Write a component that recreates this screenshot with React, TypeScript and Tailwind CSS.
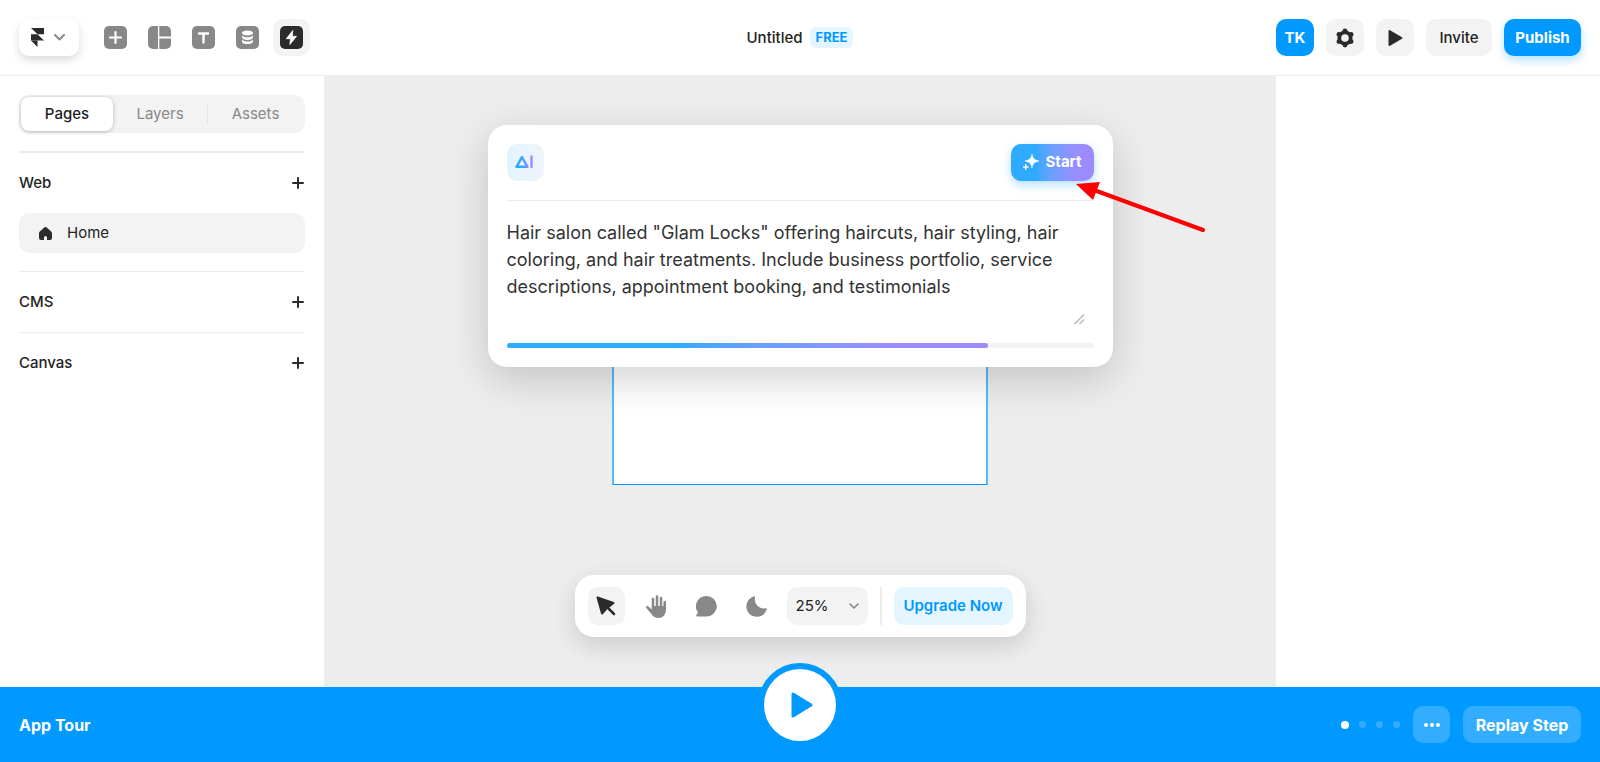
import { ReactNode, useState } from "react";

type IconProps = { className?: string };

const FramerLogo = () => (
    <svg width="13" height="19" viewBox="0 0 13 19" fill="#2b2b2b">
        <path d="M0 0h13v6.3H6.5z" />
        <path d="M0 6.3h6.5L13 12.6H0z" />
        <path d="M0 12.6h6.5V19z" />
    </svg>
);

const ChevronIcon = ({ className }: IconProps) => (
    <svg className={className} width="11" height="7" viewBox="0 0 11 7" fill="none" stroke="#888" strokeWidth="2" strokeLinecap="round" strokeLinejoin="round">
        <path d="M1 1l4.5 4.5L10 1" />
    </svg>
);

const InsertIcon = () => (
    <svg width="23" height="23" viewBox="0 0 23 23">
        <rect width="23" height="23" rx="5" fill="#888" />
        <path d="M11.5 6v11M6 11.5h11" stroke="#fff" strokeWidth="2.2" strokeLinecap="round" />
    </svg>
);

const LayoutIcon = () => (
    <svg width="23" height="23" viewBox="0 0 23 23" fill="#888">
        <path d="M5 0h5v23H5a5 5 0 0 1-5-5V5a5 5 0 0 1 5-5z" />
        <path d="M11.300 0h6.700a5 5 0 0 1 5 5v5.500H11.300z" />
        <path d="M11.300 12.500H23V18a5 5 0 0 1-5 5h-6.700z" />
    </svg>
);

const TypeIcon = () => (
    <svg width="23" height="23" viewBox="0 0 23 23">
        <rect width="23" height="23" rx="5" fill="#888" />
        <path d="M7 7.5h9M11.5 7.5v9" stroke="#fff" strokeWidth="2.4" strokeLinecap="round" />
    </svg>
);

const DatabaseIcon = () => (
    <svg width="23" height="23" viewBox="0 0 23 23">
        <rect width="23" height="23" rx="5" fill="#888" />
        <ellipse cx="11.5" cy="7" rx="5.5" ry="2.6" fill="#fff" />
        <path d="M6 9.3c1 1.5 3 2 5.5 2s4.5-.5 5.5-2v1.9c0 1.6-2.4 2.7-5.5 2.7S6 12.8 6 11.2z" fill="#fff" />
        <path d="M6 13.5c1 1.5 3 2 5.5 2s4.5-.5 5.5-2v1.9c0 1.6-2.4 2.7-5.5 2.7S6 17 6 15.4z" fill="#fff" />
    </svg>
);

const BoltIcon = () => (
    <svg width="23" height="23" viewBox="0 0 23 23">
        <rect width="23" height="23" rx="5" fill="#2b2b2b" />
        <path d="M12.8 4.5L6.3 12.7h4.2l-.6 5.8 6.6-8.2h-4.3z" fill="#fff" stroke="#fff" strokeWidth=".8" strokeLinejoin="round" />
    </svg>
);

const GearIcon = () => (
    <svg width="20" height="20" viewBox="0 0 20 20">
        <g fill="#2b2b2b">
            <circle cx="10" cy="10" r="7.6" />
            <circle cx="10" cy="2.9" r="2.4" />
            <circle cx="10" cy="17.1" r="2.4" />
            <circle cx="3.9" cy="6.4" r="2.4" />
            <circle cx="16.1" cy="6.4" r="2.4" />
            <circle cx="3.9" cy="13.6" r="2.4" />
            <circle cx="16.1" cy="13.6" r="2.4" />
        </g>
        <circle cx="10" cy="10" r="3.8" fill="#f3f3f3" />
    </svg>
);

const PlayIcon = () => (
    <svg width="15" height="18" viewBox="0 0 15 18" fill="#2b2b2b" stroke="#2b2b2b" strokeWidth="2" strokeLinejoin="round">
        <path d="M1.5 2v14L13.5 9z" />
    </svg>
);

const PlusIcon = () => (
    <svg width="12" height="12" viewBox="0 0 12 12" stroke="#2b2b2b" strokeWidth="2" strokeLinecap="round">
        <path d="M6 1v10M1 6h10" />
    </svg>
);

const HomeIcon = () => (
    <svg width="13" height="13" viewBox="0 0 13 13" fill="#2b2b2b">
        <path d="M5.3.5a1.8 1.8 0 0 1 2.4 0l4.5 4c.5.5.8 1.1.8 1.8V11a2 2 0 0 1-2 2H8v-2.500a1.500 1.500 0 0 0-3 0V13H2a2 2 0 0 1-2-2V6.3c0-.7.3-1.3.8-1.8z" />
    </svg>
);

const AiIcon = () => (
    <svg width="18" height="14" viewBox="0 0 18 14" fill="none" strokeLinecap="round" strokeLinejoin="round">
        <defs>
            <linearGradient id="ai" x1="0" x2="18" y1="0" y2="0" gradientUnits="userSpaceOnUse">
                <stop offset=".3" stopColor="#2eaaff" />
                <stop offset=".9" stopColor="#9a8cff" />
            </linearGradient>
        </defs>
        <path d="M7 2L1.5 11.8h11z" stroke="url(#ai)" strokeWidth="2.5" />
        <path d="M16.5 1.5v10.600" stroke="#9a8cff" strokeWidth="2.4" />
    </svg>
);

const SparkleIcon = () => (
    <svg width="16" height="16" viewBox="0 0 16 16" fill="#fff">
        <path d="M9 0c.7 4.5 2.2 6 7 7-4.8 1-6.3 2.5-7 7-.7-4.5-2.2-6-7-7 4.8-1 6.3-2.5 7-7z" stroke="#fff" strokeWidth=".6" />
        <path d="M2.7 10.7v4.500M.5 12.9h4.500" stroke="#fff" strokeWidth="1.5" strokeLinecap="round" />
    </svg>
);

const CursorIcon = () => (
    <svg width="20" height="20" viewBox="0 0 20 20" fill="#2b2b2b" stroke="#2b2b2b" strokeLinecap="round" strokeLinejoin="round">
        <path d="M1.5 1.5l4.5 16 4.500-5 7-5.500z" strokeWidth="2" />
        <path d="M12 12l6 6" strokeWidth="2.5" />
    </svg>
);

const HandIcon = () => (
    <svg width="20" height="23" viewBox="0 0 20 23" fill="#888" stroke="#888" strokeLinecap="round">
        <path d="M7 12V4M11 12V1.5M15 12V3M18.7 12V7" strokeWidth="2.5" />
        <path d="M5.8 11H20v3.5c0 5-3.5 8.5-7.8 8.5-3 0-5-1.3-6.500-3.8L.3 13c-.8-1.4 1-2.600 2.2-1.5l3.300 3z" stroke="none" />
    </svg>
);

const CommentIcon = () => (
    <svg width="21" height="21" viewBox="0 0 21 21" fill="#888">
        <path d="M10.5 0a10.3 10.3 0 1 1 0 20.600H1.5c-1.3 0-1.5-1.2-.8-2l1.400-2A10.3 10.3 0 0 1 10.5 0z" />
    </svg>
);

const MoonIcon = () => (
    <svg width="21" height="21" viewBox="0 0 21 21" fill="#888">
        <path d="M7.5.5c1-.4 1.8.2 1.5 1.2a9 9 0 0 0 10.3 10.6c1.1-.2 1.7.5 1.3 1.500A10.4 10.4 0 1 1 7.5.5z" />
    </svg>
);

const Arrow = ({ className }: IconProps) => (
    <svg className={className} width="130" height="50" viewBox="0 0 130 50" fill="#f00">
        <path d="M18 8L127 48" stroke="#f00" strokeWidth="4" strokeLinecap="round" />
        <path d="M0 2L24 0 17 18z" />
    </svg>
);

const tabs = ["Pages", "Layers", "Assets"];

const tools = [
    { label: "Insert", icon: <InsertIcon /> },
    { label: "Layout", icon: <LayoutIcon /> },
    { label: "Text", icon: <TypeIcon /> },
    { label: "CMS", icon: <DatabaseIcon /> },
    { label: "Actions", icon: <BoltIcon /> },
];

const canvasTools = [
    { label: "Select", icon: <CursorIcon /> },
    { label: "Pan", icon: <HandIcon /> },
    { label: "Comment", icon: <CommentIcon /> },
    { label: "Dark mode", icon: <MoonIcon /> },
];

const Header = () => (
    <header className="grid grid-cols-3 items-center h-[76px] px-[19px] border-b border-[#ececec] bg-white">
        <div className="flex items-center">
            <button aria-label="Menu" className="flex items-center justify-center gap-[10px] w-[60px] h-[37px] pr-[2px] rounded-[10px] bg-white shadow-[0_4px_10px_rgba(0,0,0,0.15)]">
                <FramerLogo />
                <ChevronIcon />
            </button>
            <div className="flex items-center gap-[7px] ml-[18px]">
                {tools.map((tool) => (
                    <button key={tool.label} aria-label={tool.label}
                    className={`flex items-center justify-center w-[37px] h-[37px] rounded-[10px] ${tool.label === "Actions" ? "bg-[#f3f3f3]" : ""}`}>
                        {tool.icon}
                    </button>
                ))}
            </div>
        </div>
        <div className="flex items-center justify-center gap-[7px]">
            <h1 className="font-medium">Untitled</h1>
            <span className="px-[6px] rounded-md bg-[#e5f5ff] text-[13px] leading-[21px] font-bold text-[#0099ff]">FREE</span>
        </div>
        <div className="flex items-center justify-end gap-3">
            <button className="w-[38px] h-[37px] rounded-[10px] bg-[#0099ff] font-bold text-white">TK</button>
            <button aria-label="Settings" className="flex items-center justify-center w-[38px] h-[37px] rounded-[10px] bg-[#f3f3f3]"><GearIcon /></button>
            <button aria-label="Preview" className="flex items-center justify-center w-[38px] h-[37px] rounded-[10px] bg-[#f3f3f3]"><PlayIcon /></button>
            <button className="w-[66px] h-[37px] rounded-[10px] bg-[#f3f3f3] font-medium">Invite</button>
            <button className="w-[77px] h-[37px] rounded-[10px] bg-[#0099ff] font-bold text-white shadow-[0_4px_10px_rgba(0,153,255,0.3)]">Publish</button>
        </div>
    </header>
);

const Section = ({ title, children }: { title: string; children?: ReactNode }) => (
    <section className="border-b border-[#ececec] last:border-b-0">
        <div className="flex items-center justify-between h-[60px] pr-px">
            <h2 className="font-medium">{title}</h2>
            <button aria-label={`Add ${title}`}><PlusIcon /></button>
        </div>
        {children}
    </section>
);

const Sidebar = () => {
    const [active, setActive] = useState<string>("Pages");

    return (
        <aside className="w-[324px] shrink-0 px-[19px] pt-[19px] bg-white">
            <div className="flex items-center h-[38px] p-[2px] rounded-[10px] bg-[#f3f3f3]">
                {tabs.map((tab) => (
                    <button key={tab} onClick={() => setActive(tab)}
                    className={`h-full ${active === tab ? "w-[92px] rounded-lg bg-white font-medium shadow-[0_1px_4px_rgba(0,0,0,0.25)]" : "flex-1 text-[#888]"}`}>
                        <span className={`block leading-[18px] ${tab === "Layers" ? "border-r border-[#e2e2e2]" : ""}`}>{tab}</span>
                    </button>
                ))}
            </div>
            <div className="mt-[18px] border-t-2 border-[#ececec]">
                <Section title="Web">
                    <a href="#home" className="flex items-center gap-[15px] h-10 pl-5 mb-[18px] rounded-[10px] bg-[#f3f3f3]">
                        <HomeIcon />
                        Home
                    </a>
                </Section>
                <Section title="CMS" />
                <Section title="Canvas" />
            </div>
        </aside>
    );
};

const AiDialog = ({ progress }: { progress: number }) => {
    const [prompt, setPrompt] = useState<string>(
        'Hair salon called "Glam Locks" offering haircuts, hair styling, hair coloring, and hair treatments. Include business portfolio, service descriptions, appointment booking, and testimonials'
    );

    return (
        <div className="relative w-[625px] h-[242px] mt-[49px] px-[19px] pt-[19px] rounded-[19px] bg-white shadow-[0_12px_40px_rgba(0,0,0,0.18)]">
            <div className="flex items-center justify-between h-[57px] pb-[20px] border-b border-[#ececec]">
                <div className="flex items-center justify-center w-[37px] h-[37px] pr-[2px] rounded-[10px] bg-linear-to-r from-[#e2f4ff] to-[#f1f4fa]">
                    <AiIcon />
                </div>
                <button className="flex items-center justify-center gap-[7px] w-[83px] h-[37px] rounded-[10px] bg-linear-to-r from-[#2eaaff] from-30% to-[#9a8cff] to-80% font-bold text-white shadow-[0_4px_10px_rgba(46,170,255,0.35)]">
                    <SparkleIcon />
                    Start
                </button>
            </div>
            <div className="relative mt-[18px]">
                <textarea aria-label="Prompt" value={prompt} onChange={(e) => setPrompt(e.target.value)}
                className="block w-[577px] h-[106px] resize-none outline-none text-lg leading-[27px] text-[#333]" />
                <svg className="absolute right-[9px] bottom-0" width="11" height="11" viewBox="0 0 11 11" stroke="#bbb" strokeWidth="1.5" strokeLinecap="round">
                    <path d="M1 9.5L9.5 1M6 9.5L9.5 6" />
                </svg>
            </div>
            <div role="progressbar" aria-valuenow={progress} aria-label="Progress" className="h-[5px] mt-[18px] rounded-full bg-[#f3f3f3]">
                <div className="h-full rounded-full bg-linear-to-r from-[#2eaaff] from-35% to-[#9a8cff] to-80%" style={{ width: `${progress}%` }} />
            </div>
            <Arrow className="absolute left-[588px] top-[57px]" />
        </div>
    );
};

const Toolbar = () => (
    <div className="flex items-center h-[62px] mb-[50px] px-[13px] rounded-[19px] bg-white shadow-[0_8px_24px_rgba(0,0,0,0.15)]">
        <div className="flex gap-[13px]">
            {canvasTools.map((tool) => (
                <button key={tool.label} aria-label={tool.label}
                className={`flex items-center justify-center w-[37px] h-[38px] rounded-[10px] ${tool.label === "Select" ? "bg-[#f3f3f3]" : ""}`}>
                    {tool.icon}
                </button>
            ))}
        </div>
        <div className="relative ml-3">
            <select aria-label="Zoom" defaultValue="25%" className="block w-[81px] h-[38px] pl-[9px] rounded-[10px] bg-[#f3f3f3] appearance-none">
                <option>25%</option>
                <option>50%</option>
                <option>100%</option>
            </select>
            <svg className="absolute right-[9px] top-4 pointer-events-none" width="10" height="7" viewBox="0 0 10 7" fill="none" stroke="#888" strokeWidth="1.600" strokeLinecap="round" strokeLinejoin="round">
                <path d="M1 1l4 4 4-4" />
            </svg>
        </div>
        <div className="w-[2px] h-[38px] mx-3 bg-[#ececec]" />
        <button className="w-[119px] h-[38px] rounded-[10px] bg-[#e5f5ff] font-semibold text-[#0099ff]">Upgrade Now</button>
    </div>
);

const Canvas = () => (
    <main className="relative flex-1 flex flex-col items-center justify-between bg-[#ededed]">
        <div className="absolute top-[60px] left-1/2 w-[376px] h-[349px] -translate-x-1/2 border-x-2 border-b border-x-[#55baff] border-b-[#0099ff] bg-white" />
        <AiDialog progress={82} />
        <Toolbar />
    </main>
);

const Footer = () => (
    <footer className="relative flex items-center justify-between h-[75px] px-[19px] bg-[#0099ff] text-base leading-[22px] font-bold text-white">
        <div>App Tour</div>
        <button aria-label="Play tour" className="absolute left-1/2 -top-6 flex items-center justify-center w-[84px] h-[84px] -translate-x-1/2 rounded-full border-6 border-[#0099ff] bg-white">
            <svg className="ml-1" width="24" height="28" viewBox="0 0 24 28" fill="#0099ff" stroke="#0099ff" strokeWidth="3" strokeLinejoin="round">
                <path d="M3 3v22l18-11z" />
            </svg>
        </button>
        <div className="flex items-center gap-[13px]">
            <div className="flex items-center gap-[10px]">
                <span className="w-2 h-2 rounded-full bg-white" />
                <span className="w-[7px] h-[7px] rounded-full bg-white/20" />
                <span className="w-[7px] h-[7px] rounded-full bg-white/20" />
                <span className="w-[7px] h-[7px] rounded-full bg-white/20" />
            </div>
            <button aria-label="More" className="flex items-center justify-center w-[37px] h-[37px] rounded-[10px] bg-white/20">
                <svg width="16" height="4" viewBox="0 0 16 4" fill="#fff">
                    <circle cx="2" cy="2" r="2" />
                    <circle cx="8" cy="2" r="2" />
                    <circle cx="14" cy="2" r="2" />
                </svg>
            </button>
            <button className="w-[118px] h-[37px] rounded-[10px] bg-white/20">Replay Step</button>
        </div>
    </footer>
);

const App = () => {
    return (
        <div className="flex flex-col min-h-screen font-[Inter,sans-serif] text-[15px] leading-6 text-[#222]">
            <Header />
            <div className="flex flex-1">
                <Sidebar />
                <Canvas />
                <aside className="w-[324px] shrink-0 bg-white" />
            </div>
            <Footer />
        </div>
    );
};

export default App;
